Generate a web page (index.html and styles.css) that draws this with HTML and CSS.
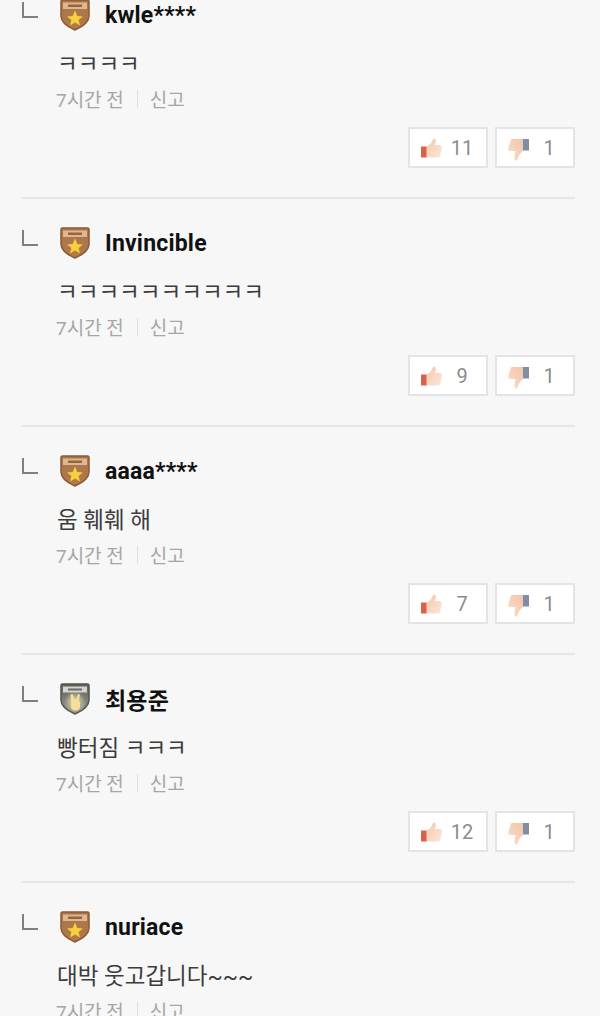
FILE: index.html
```html
<!DOCTYPE html>
<html lang="ko">
<head>
  <meta charset="UTF-8" />
  <title>댓글</title>
  <link rel="stylesheet" href="styles.css">
</head>
<body>
  <svg class="defs" width="0" height="0">
    <defs>
      <linearGradient id="badgeBrown" x1="0" y1="0" x2="0" y2="1">
        <stop offset="0" stop-color="#a9764b"/>
        <stop offset="1" stop-color="#b07a48"/>
      </linearGradient>
      <linearGradient id="badgeGray" x1="0" y1="0" x2="0" y2="1">
        <stop offset="0" stop-color="#5e5e5b"/>
        <stop offset="1" stop-color="#9a9a96"/>
      </linearGradient>
      <radialGradient id="handGlow">
        <stop offset="0" stop-color="#f7e6a8"/>
        <stop offset="1" stop-color="#f7e6a8" stop-opacity="0"/>
      </radialGradient>
      <linearGradient id="skinUp" x1="0" y1="0" x2="1" y2="1">
        <stop offset="0" stop-color="#f6c9ac"/>
        <stop offset="1" stop-color="#fae6d8"/>
      </linearGradient>
      <linearGradient id="skinDown" x1="0" y1="1" x2="1" y2="0">
        <stop offset="0" stop-color="#f9dfcd"/>
        <stop offset="1" stop-color="#f4c3a6"/>
      </linearGradient>
      <symbol id="star-badge" viewBox="0 0 30 32">
        <path d="M1 2.500Q1 1 2.500 1H27.500Q29 1 29 2.500V17C29 24 22 28 15 31C8 28 1 24 1 17Z" fill="url(#badgeBrown)" stroke="#8a5a34" stroke-width="1.500"/>
        <path d="M3 3.500H27V10H3Z" fill="#e0b592"/>
        <path d="M8 5.500H22V8H8Z" fill="#94663f"/>
        <path d="M15 11.500L17.300 17L23 17.400L18.600 21L20 26.500L15 23.500L10 26.500L11.400 21L7 17.400L12.700 17Z" fill="#f8cf3e"/>
      </symbol>
      <symbol id="hand-badge" viewBox="0 0 30 32">
        <path d="M1 2.500Q1 1 2.500 1H27.500Q29 1 29 2.500V17C29 24 22 28 15 31C8 28 1 24 1 17Z" fill="url(#badgeGray)" stroke="#55554f" stroke-width="1.500"/>
        <path d="M3 3.500H27V9.500H3Z" fill="#d5d5d0"/>
        <path d="M8 5.500H22V7.500H8Z" fill="#6b6b65"/>
        <circle cx="15" cy="19" r="11" fill="url(#handGlow)"/>
        <path d="M10.500 11.500L12.500 11L14.500 16.500L16.500 16.500L18 11L20 11.500L18.800 18L20 19V24C20 26 18 27.500 15.500 27.500C12.500 27.500 11 25.500 11 23.500V18.500Z" fill="#f6de9c"/>
      </symbol>
      <symbol id="thumb-up" viewBox="0 0 21 20">
        <path d="M5 8.500C9 7.500 10.500 4.500 12 1C12.800 -.2 15 .5 15 2.800C15 4.500 14.500 6 14 7H18.500C20.200 7 21 8.200 20.700 9.500L19.300 17.800C19 19 18.200 19.500 17 19.500H5Z" fill="url(#skinUp)"/>
        <path d="M0 8.500H5.500V19.500H0Z" fill="#d9604a"/>
      </symbol>
      <symbol id="thumb-down" viewBox="0 0 21 23">
        <path d="M15 1H4.500C3.500 1 2.800 1.500 2.500 2.500L.3 10.500C0 12 1 13 2.500 13H7.500C7 15 6.500 17 6.500 20C6.500 23 9 23.300 9.500 21.500C10.500 18 12 15 15 13Z" fill="url(#skinDown)"/>
        <path d="M15 1H21V12.500H15Z" fill="#7f8ea6"/>
      </symbol>
    </defs>
  </svg>

  <main class="comment-list">
    <section class="comment">
      <div class="comment-head">
        <span class="reply-mark"></span>
        <svg class="badge"><use href="#star-badge"/></svg>
        <strong class="name">kwle****</strong>
      </div>
      <p class="text">ㅋㅋㅋㅋ</p>
      <div class="meta"><span>7시간 전</span><i class="sep"></i><span>신고</span></div>
      <div class="votes">
        <button class="vote"><svg class="thumb-up"><use href="#thumb-up"/></svg><span>11</span></button>
        <button class="vote"><svg class="thumb-down"><use href="#thumb-down"/></svg><span>1</span></button>
      </div>
    </section>

    <section class="comment">
      <div class="comment-head">
        <span class="reply-mark"></span>
        <svg class="badge"><use href="#star-badge"/></svg>
        <strong class="name">Invincible</strong>
      </div>
      <p class="text">ㅋㅋㅋㅋㅋㅋㅋㅋㅋㅋ</p>
      <div class="meta"><span>7시간 전</span><i class="sep"></i><span>신고</span></div>
      <div class="votes">
        <button class="vote"><svg class="thumb-up"><use href="#thumb-up"/></svg><span>9</span></button>
        <button class="vote"><svg class="thumb-down"><use href="#thumb-down"/></svg><span>1</span></button>
      </div>
    </section>

    <section class="comment">
      <div class="comment-head">
        <span class="reply-mark"></span>
        <svg class="badge"><use href="#star-badge"/></svg>
        <strong class="name">aaaa****</strong>
      </div>
      <p class="text">움 훼훼 해</p>
      <div class="meta"><span>7시간 전</span><i class="sep"></i><span>신고</span></div>
      <div class="votes">
        <button class="vote"><svg class="thumb-up"><use href="#thumb-up"/></svg><span>7</span></button>
        <button class="vote"><svg class="thumb-down"><use href="#thumb-down"/></svg><span>1</span></button>
      </div>
    </section>

    <section class="comment">
      <div class="comment-head">
        <span class="reply-mark"></span>
        <svg class="badge"><use href="#hand-badge"/></svg>
        <strong class="name">최용준</strong>
      </div>
      <p class="text">빵터짐 ㅋㅋㅋ</p>
      <div class="meta"><span>7시간 전</span><i class="sep"></i><span>신고</span></div>
      <div class="votes">
        <button class="vote"><svg class="thumb-up"><use href="#thumb-up"/></svg><span>12</span></button>
        <button class="vote"><svg class="thumb-down"><use href="#thumb-down"/></svg><span>1</span></button>
      </div>
    </section>

    <section class="comment">
      <div class="comment-head">
        <span class="reply-mark"></span>
        <svg class="badge"><use href="#star-badge"/></svg>
        <strong class="name">nuriace</strong>
      </div>
      <p class="text">대박 웃고갑니다~~~</p>
      <div class="meta"><span>7시간 전</span><i class="sep"></i><span>신고</span></div>
    </section>
  </main>
</body>
</html>
```

FILE: styles.css
```css
html, body { height: 100%; }
body {
  margin: 0;
  height: 1016px;
  overflow: hidden;
  background: #f7f7f7;
  font-family: Roboto, "Noto Sans CJK KR", sans-serif;
}
.defs { display: block; height: 0; }
.comment-list { margin: -29px 25px 0 22px; }
.comment {
  height: 226px;
  border-bottom: 2px solid #e6e6e6;
}
.comment-head {
  display: flex;
  align-items: center;
  height: 40px;
  padding-top: 24px;
}
.reply-mark {
  width: 16px;
  height: 16px;
  margin: -10px 0 0 0;
  border-left: 2px solid #808080;
  border-bottom: 2px solid #808080;
  box-sizing: border-box;
}
.badge { width: 30px; height: 32px; margin-left: 22px; filter: blur(.4px); }
.name {
  margin-left: 15px;
  font-size: 23px;
  letter-spacing: .2px;
  font-weight: 700;
  color: #111;
}
.text {
  margin: 11px 0 0 35px;
  height: 36px;
  line-height: 36px;
  font-size: 22.5px;
  color: #3c3c3c;
}
.meta {
  display: flex;
  align-items: center;
  height: 24px;
  margin: 4px 0 0 34px;
  font-size: 19px;
  color: #a6a6a6;
}
.sep {
  width: 1px;
  height: 18px;
  margin: 2px 12px 0 13px;
  background: #dedede;
}
.votes {
  display: flex;
  justify-content: flex-end;
  gap: 7px;
  margin-top: 17px;
}
.vote {
  display: flex;
  align-items: center;
  width: 80px;
  height: 41px;
  padding: 0 0 0 11px;
  box-sizing: border-box;
  background: #fff;
  border: 2px solid #e4e4e4;
  font-family: inherit;
  font-size: 20px;
  color: #8c8c8c;
}
.thumb-up { width: 21px; height: 20px; flex: none; filter: blur(.3px); }
.thumb-down { width: 21px; height: 23px; flex: none; margin-top: 3px; filter: blur(.3px); }
.vote span { flex: 1; text-align: center; padding-right: 4px; }
```
